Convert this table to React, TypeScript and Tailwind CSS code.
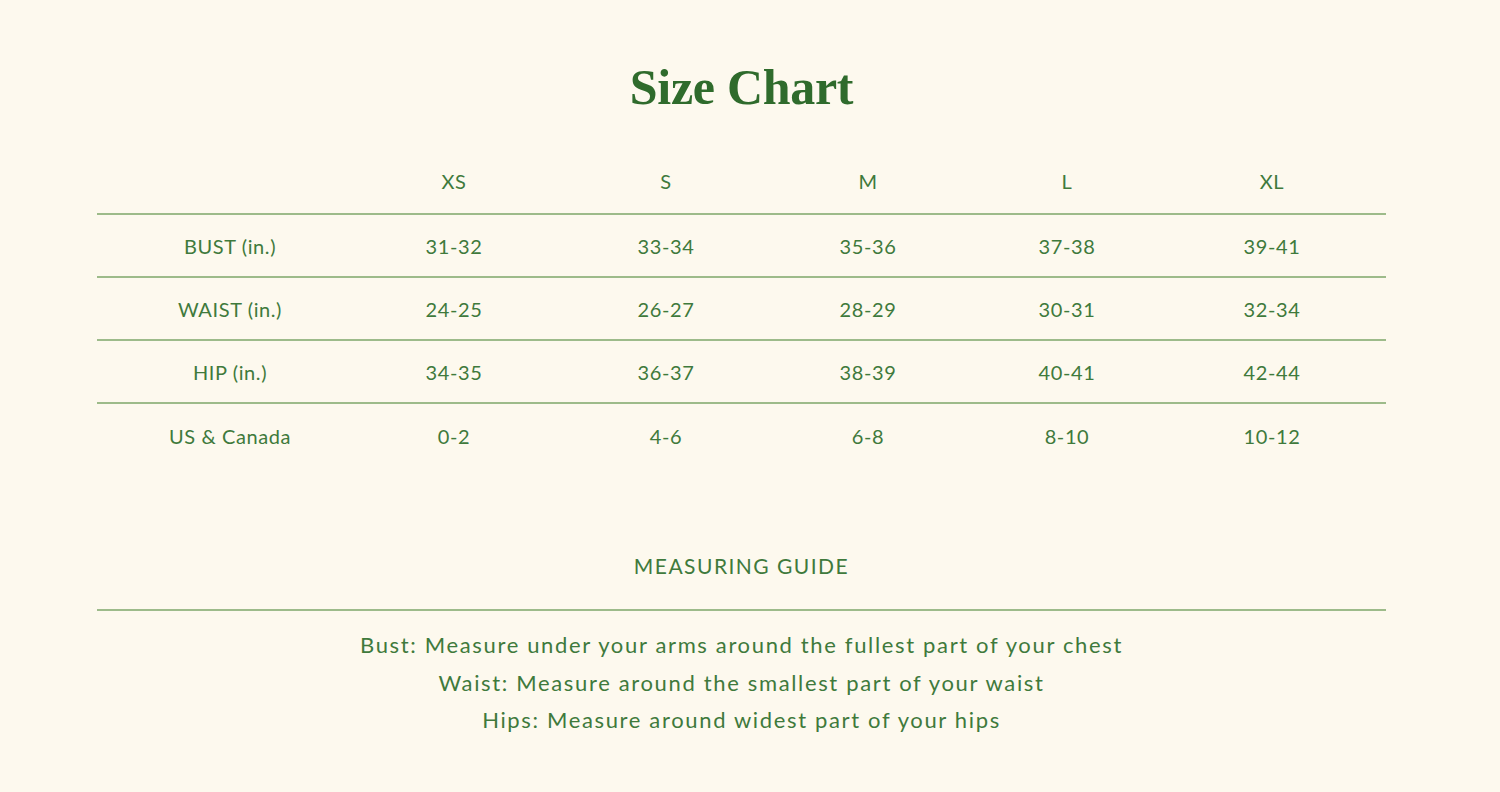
const sizes = ['XS', 'S', 'M', 'L', 'XL']

const rows: { label: string; values: string[] }[] = [
  { label: 'BUST (in.)', values: ['31-32', '33-34', '35-36', '37-38', '39-41'] },
  { label: 'WAIST (in.)', values: ['24-25', '26-27', '28-29', '30-31', '32-34'] },
  { label: 'HIP (in.)', values: ['34-35', '36-37', '38-39', '40-41', '42-44'] },
  { label: 'US & Canada', values: ['0-2', '4-6', '6-8', '8-10', '10-12'] },
]

const gridCols = 'grid grid-cols-[266px_182px_242px_162px_236px_174px_1fr] items-center'

export default function App() {
  return (
    <div
      className="w-[1500px] h-[792px] bg-[#fdf9ee] text-[#3f7a3c] overflow-hidden"
      style={{ fontFamily: 'Lato, "Open Sans", sans-serif' }}
    >
      <div className="pl-[97px] pr-[114px]">
        {/* Title */}
        <h1
          className="pt-[50px] h-[150px] text-center text-[50px] font-bold text-[#2f6b2c] tracking-[-0.3px]"
          style={{ fontFamily: '"Liberation Serif", "DejaVu Serif", serif' }}
        >
          Size Chart
        </h1>

        {/* Size table */}
        <div className={`${gridCols} h-[65px] pb-[2px] text-[20px] tracking-[0.03em] border-b-2 border-[#9dbb8a]`}>
          <div />
          {sizes.map((s) => (
            <div key={s} className="text-center">{s}</div>
          ))}
        </div>
        {rows.map((row, i) => (
          <div
            key={row.label}
            className={`${gridCols} h-[63px] text-[20px] tracking-[0.03em] ${i < rows.length - 1 ? 'border-b-2 border-[#9dbb8a]' : ''}`}
          >
            <div className="text-center">{row.label}</div>
            {row.values.map((v, j) => (
              <div key={j} className="text-center">{v}</div>
            ))}
          </div>
        ))}

        {/* Measuring guide */}
        <div className="mt-[83px] text-center text-[21px] tracking-[0.07em] h-[61px] border-b-2 border-[#9dbb8a]">
          MEASURING GUIDE
        </div>
        <div className="pt-[15px] text-center text-[22px] tracking-[0.075em] leading-[37.5px]">
          <p>Bust: Measure under your arms around the fullest part of your chest</p>
          <p>Waist: Measure around the smallest part of your waist</p>
          <p>Hips: Measure around widest part of your hips</p>
        </div>
      </div>
    </div>
  )
}
